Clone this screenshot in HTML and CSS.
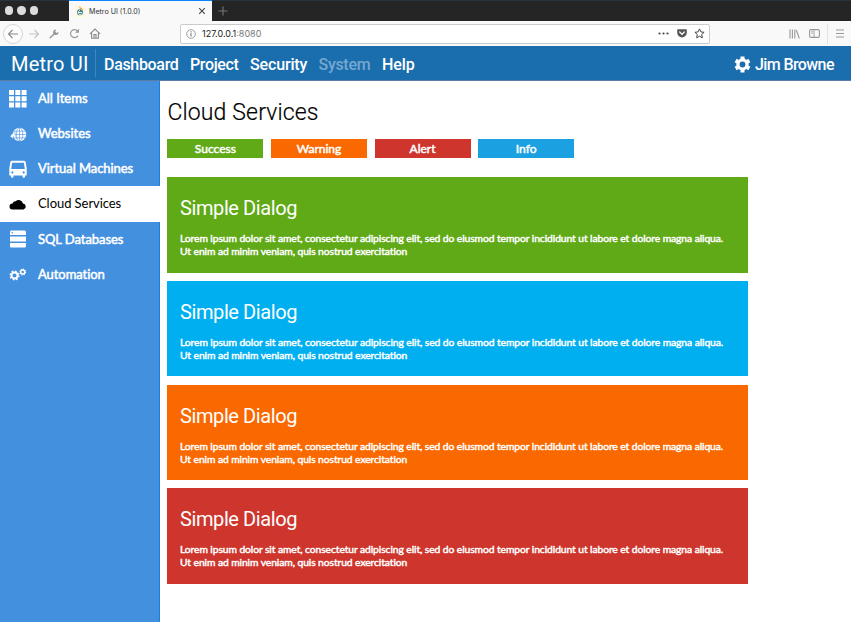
FILE: index.html
```html
<!DOCTYPE html>
<html lang="en">
<head>
<meta charset="utf-8">
<title>Metro UI (1.0.0)</title>
<link rel="stylesheet" href="styles.css">
</head>
<body>
<header class="tabs">
  <div class="lights"><i></i><i></i><i></i></div>
  <div class="tab">
    <svg class="favicon" width="10" height="12" viewBox="0 0 10 12"><path d="M0 0h6l4 4v8H0z" fill="#fff6dc"/><circle cx="5" cy="7.300" r="3" fill="#39859b"/><path d="M3 7.500h4M5 5.500a2 2 0 1 0 2 3" fill="none" stroke="#f4f4e5" stroke-width=".9"/><path d="M4 1.200l4.500 3.600-3.300-.6z" fill="#e99b35"/></svg>
    <span class="tab-title">Metro UI (1.0.0)</span>
    <svg class="close" width="8" height="8" viewBox="0 0 8 8"><path d="M1.200 1.200l5.600 5.600M6.800 1.200L1.200 6.800" stroke="#444" stroke-width="1.100"/></svg>
  </div>
  <svg class="plus" width="10" height="10" viewBox="0 0 10 10"><path d="M5 .5v9M.5 5h9" stroke="#777" stroke-width="1.100"/></svg>
</header>
<div class="toolbar">
  <div class="back"><svg width="12" height="10" viewBox="0 0 12 10"><path d="M11 5H1.500M5.500 1l-4 4 4 4" fill="none" stroke="#888" stroke-width="1.100"/></svg></div>
  <svg class="forward" width="12" height="10" viewBox="0 0 12 10"><path d="M1 5h9.500M6.500 1l4 4-4 4" fill="none" stroke="#c5c5c5" stroke-width="1.200"/></svg>
  <svg class="wrench" width="10" height="10" viewBox="0 0 10 10"><path d="M1.200 8.800L5.600 4.400" stroke="#999" stroke-width="1.400" stroke-linecap="round"/><path d="M7.200.7A2.700 2.700 0 1 0 9.400 3L7.600 4 6.200 2.600z" fill="#999"/></svg>
  <svg class="reload" width="11" height="11" viewBox="0 0 11 11"><path d="M9 7.600A4 4 0 1 1 8.600 3" fill="none" stroke="#999" stroke-width="1.200"/><path d="M10 .8v4H6z" fill="#999"/></svg>
  <svg class="home" width="12" height="11" viewBox="0 0 12 11"><path d="M1 5.800l5-4.700 5 4.700M2.600 5v5.200h6.800V5M5 10V6.500h2V10" fill="none" stroke="#888" stroke-width="1.100"/></svg>
  <div class="url">
    <svg width="10" height="10" viewBox="0 0 10 10"><circle cx="5" cy="5" r="4.300" fill="none" stroke="#888" stroke-width=".8"/><path d="M5 4.300v3.200M5 2.300v1.100" stroke="#777" stroke-width="1.100"/></svg>
    <span class="addr">127.0.0.1<b>:8080</b></span>
    <svg class="dots" width="11" height="3" viewBox="0 0 11 3"><g fill="#444"><circle cx="1.500" cy="1.500" r="1.100"/><circle cx="5.500" cy="1.500" r="1.100"/><circle cx="9.500" cy="1.500" r="1.100"/></g></svg>
    <svg class="pocket" width="10" height="9" viewBox="0 0 10 9"><path d="M1 .3h8q.8 0 .8.8v2.600a4.800 4.800 0 0 1-9.600 0V1.100Q.2.3 1 .3z" fill="#555"/><path d="M2.700 3l2.300 2.300L7.300 3" fill="none" stroke="#fff" stroke-width="1.200" stroke-linecap="round"/></svg>
    <svg class="star" width="11" height="11" viewBox="0 0 11 11"><path d="M5.500 .9l1.400 3 3.200.4-2.400 2.200.6 3.300-2.800-1.600-2.800 1.600.6-3.300L.9 4.300l3.200-.4z" fill="none" stroke="#444" stroke-linejoin="round"/></svg>
  </div>
  <svg class="library" width="11" height="10" viewBox="0 0 11 10"><path d="M1 .5v9M3.400 .5v9M5.800 .5v9M7.300 1l3 8.500" stroke="#999" stroke-width="1.100"/></svg>
  <svg class="panel" width="11" height="9" viewBox="0 0 11 9"><rect x=".6" y=".6" width="9.800" height="7.800" rx="1.300" fill="none" stroke="#999" stroke-width="1.100"/><path d="M5 1v7M2.200 2.700h1.500M2.200 4.200h1.500" stroke="#999" stroke-width=".9"/></svg>
  <i class="rule"></i>
  <svg class="burger" width="8" height="9" viewBox="0 0 8 9"><path d="M0 1h8M0 4.500h8M0 8h8" stroke="#999" stroke-width="1.100"/></svg>
</div>
<nav class="nav">
  <span class="brand">Metro UI</span>
  <span class="link l1">Dashboard</span><span class="link l2">Project</span><span class="link l3">Security</span><span class="link l4 muted">System</span><span class="link l5">Help</span>
  <svg class="gear" width="17" height="17" viewBox="0 0 18 18"><circle cx="9" cy="9" r="4.800" fill="none" stroke="#fff" stroke-width="3.400"/><path d="M9 .6v3M9 14.400v3M1.720 4.800l2.600 1.500M13.680 11.700l2.600 1.500M1.720 13.200l2.600-1.500M13.680 6.300l2.600-1.500" stroke="#fff" stroke-width="4.200"/></svg>
  <span class="link user">Jim Browne</span>
</nav>
<div class="page">
  <aside class="side">
    <div class="item"><svg width="18" height="18" viewBox="0 0 18 18"><path d="M0 0h5v5H0zM6.300 0h5v5h-5zM12.600 0h5v5h-5zM0 6.300h5v5H0zM6.300 6.300h5v5h-5zM12.600 6.300h5v5h-5zM0 12.600h5v5H0zM6.300 12.600h5v5h-5zM12.600 12.600h5v5h-5z" fill="#fff"/></svg><span class="w1">All Items</span></div>
    <div class="item"><svg width="18" height="18" viewBox="0 0 18 18"><circle cx="10.500" cy="9.500" r="6.700" fill="#fff"/><path d="M10.500 3v13M4 9.500h13M5 6.200h11M5 12.800h11" stroke="#4390df" stroke-width=".6"/><ellipse cx="10.500" cy="9.500" rx="3.300" ry="6.700" fill="none" stroke="#4390df" stroke-width=".6"/><path d="M1 11.200l4.800-5v3q.2 3 2.700 4.800-2.800-.2-4.200-2.500l-.5 2.200z" fill="#fff" stroke="#4390df" stroke-width=".4"/></svg><span class="w2">Websites</span></div>
    <div class="item"><svg width="18" height="18" viewBox="0 0 18 18"><path d="M3 .8h12q1.500 0 1.800 1.700l.9 6V15.500h-1.700V17q0 .8-1.200.8T13.600 17v-1.500H4.400V17q0 .8-1.200.8T2 17v-1.500H.3v-7l.9-6Q1.500.8 3 .8zM3.100 2.700L2.200 9h13.600l-.9-6.300zM3.300 11.300a1.100 1.100 0 1 0 .1 0zM14.600 11.300a1.100 1.100 0 1 0 .1 0z" fill="#fff" fill-rule="evenodd"/></svg><span>Virtual Machines</span></div>
    <div class="item active"><svg width="18" height="18" viewBox="0 0 18 18"><path d="M3.500 14.500a3 3 0 0 1 0-6 3.200 3.200 0 0 1 3.200-2.200 4.200 4.200 0 0 1 7.200 2.300A3 3 0 0 1 14.500 14.500z" fill="#000"/></svg><span>Cloud Services</span></div>
    <div class="item"><svg width="18" height="18" viewBox="0 0 18 18"><path d="M2 .5h13.500q1.500 0 1.500 1.500v3H1V2Q1 .5 2 .5zM1 6.500h16v5H1zM1 13h16v3q0 1.500-1.500 1.500H2Q1 17.500 1 16z" fill="#fff"/><circle cx="3.200" cy="2.800" r=".8" fill="#4390df"/></svg><span>SQL Databases</span></div>
    <div class="item"><svg width="18" height="18" viewBox="0 0 18 18"><g fill="none" stroke="#fff"><circle cx="5.500" cy="10.500" r="3" stroke-width="1.900"/><circle cx="5.500" cy="10.500" r="4.300" stroke-width="1.500" stroke-dasharray="1.690 1.687"/><circle cx="13.700" cy="7" r="2" stroke-width="1.500"/><circle cx="13.700" cy="7" r="2.900" stroke-width="1.100" stroke-dasharray="1.140 1.137"/></g></svg><span>Automation</span></div>
  </aside>
  <main class="main">
    <h1>Cloud Services</h1>
    <div class="buttons"><span class="btn green">Success</span><span class="btn orange">Warning</span><span class="btn red">Alert</span><span class="btn blue">Info</span></div>
    <section class="card green"><h2>Simple Dialog</h2><p>Lorem ipsum dolor sit amet, consectetur adipiscing elit, sed do eiusmod tempor incididunt ut labore et dolore magna aliqua.<br>Ut enim ad minim veniam, quis nostrud exercitation</p></section>
    <section class="card cyan"><h2>Simple Dialog</h2><p>Lorem ipsum dolor sit amet, consectetur adipiscing elit, sed do eiusmod tempor incididunt ut labore et dolore magna aliqua.<br>Ut enim ad minim veniam, quis nostrud exercitation</p></section>
    <section class="card orange"><h2>Simple Dialog</h2><p>Lorem ipsum dolor sit amet, consectetur adipiscing elit, sed do eiusmod tempor incididunt ut labore et dolore magna aliqua.<br>Ut enim ad minim veniam, quis nostrud exercitation</p></section>
    <section class="card red"><h2>Simple Dialog</h2><p>Lorem ipsum dolor sit amet, consectetur adipiscing elit, sed do eiusmod tempor incididunt ut labore et dolore magna aliqua.<br>Ut enim ad minim veniam, quis nostrud exercitation</p></section>
  </main>
</div>
</body>
</html>
```
FILE: styles.css
```css
* { box-sizing: border-box; }
body { margin: 0; width: 851px; height: 622px; overflow: hidden; background: #fff; font-family: Lato, sans-serif; white-space: nowrap; }
svg { display: block; flex: none; }
.tabs { display: flex; align-items: center; height: 21px; background: #252525; border-top: 1px solid #263442; }
.lights { display: flex; gap: 4.500px; width: 69px; padding-left: 4.500px; margin-top: -1px; }
.lights i { width: 8.300px; height: 8.300px; border-radius: 50%; background: #dcdcdc; }
.tab { display: flex; align-items: center; width: 143px; height: 21px; margin-top: -1px; padding-left: 6px; background: #f9f9fa; border-top: 1px solid #0a84ff; }
.tab-title { width: 113px; margin-left: 4px; font: 7.100px Inter, sans-serif; color: #333; }
.close { margin-left: -4px; }
.plus { margin: -1px 0 0 6px; }
.toolbar { display: flex; align-items: center; height: 25px; background: #f9f9fa; }
.back { display: flex; align-items: center; justify-content: center; width: 20px; height: 20px; margin-left: 3px; border: 1px solid #d5d5d5; border-radius: 50%; background: #fcfcfc; }
.forward { margin-left: 5px; }
.wrench { margin-left: 9px; }
.reload { margin-left: 10px; }
.home { margin-left: 9px; }
.url { display: flex; align-items: center; width: 530px; height: 20px; margin-left: 79px; padding-left: 5px; border: 1px solid #ccc; border-radius: 2px; background: #fff; }
.addr { width: 457px; margin-left: 6px; font: 9px Inter, sans-serif; color: #222; }
.addr b { font-weight: 400; color: #777; }
.dots { margin-left: -1px; }
.pocket { margin-left: 8px; }
.star { margin-left: 7px; }
.library { margin-left: 79px; }
.panel { margin-left: 9px; }
.rule { width: 1px; height: 20px; margin-left: 7px; background: #e2e2e2; }
.burger { margin-left: 8px; }
.nav { display: flex; align-items: center; height: 35px; background: #1b6eae; border-bottom: 1px solid #597da5; color: #fff; font-family: Roboto, sans-serif; }
.brand { width: 96px; height: 28px; padding-left: 11px; border-right: 1px solid #3f86c6; font-size: 20px; line-height: 30px; letter-spacing: .2px; }
.link { font-size: 16px; font-weight: 500; line-height: 28px; padding-top: 3px; }
.l1 { width: 86px; margin-left: 8px; letter-spacing: -.32px; }
.l2 { width: 60px; letter-spacing: -.35px; }
.l3 { width: 68.500px; letter-spacing: -.15px; }
.l4 { width: 63.500px; letter-spacing: -.3px; }
.l5 { width: 352px; letter-spacing: -.1px; }
.gear { margin-top: 2px; }
.muted { color: #76a7cf; }
.user { margin-left: 4px; letter-spacing: -.6px; }
.page { display: flex; height: 541px; }
.side { width: 160px; background: #4390df; border-right: 1px solid #1a82dc; }
.item { display: flex; align-items: center; width: 160px; height: 35.150px; padding-left: 9px; gap: 11px; color: #fff; font-size: 13px; letter-spacing: -.06px; -webkit-text-stroke: .5px #fff; }
.item span { margin-top: -1px; }
.w1, .w2 { letter-spacing: 0; }
.active { background: #fff; color: #000; -webkit-text-stroke: 0; }
.main { padding-left: 7.400px; }
h1 { margin: 15px 0 0; height: 43px; padding-top: 1px; font: 300 23px/32px Roboto, sans-serif; letter-spacing: .15px; color: #000; -webkit-text-stroke: .2px #000; }
.buttons { display: flex; gap: 7.600px; height: 38.400px; }
.btn { width: 96px; height: 19px; line-height: 19px; text-align: center; font-size: 12px; color: #fff; -webkit-text-stroke: .5px #fff; }
.card { width: 581px; height: 95.500px; margin-bottom: 8.100px; padding: 17px 12.600px 0; color: #fff; }
h2 { margin: 0; font: 400 20px/28px Roboto, sans-serif; letter-spacing: -.4px; }
p { margin: 10px 0 0; font-size: 10.300px; line-height: 13px; letter-spacing: -.08px; -webkit-text-stroke: .45px #fff; }
.green { background: #60a917; }
.orange { background: #fa6800; }
.red { background: #ce352c; }
.blue { background: #1ba1e2; }
.cyan { background: #00aff0; }
```
